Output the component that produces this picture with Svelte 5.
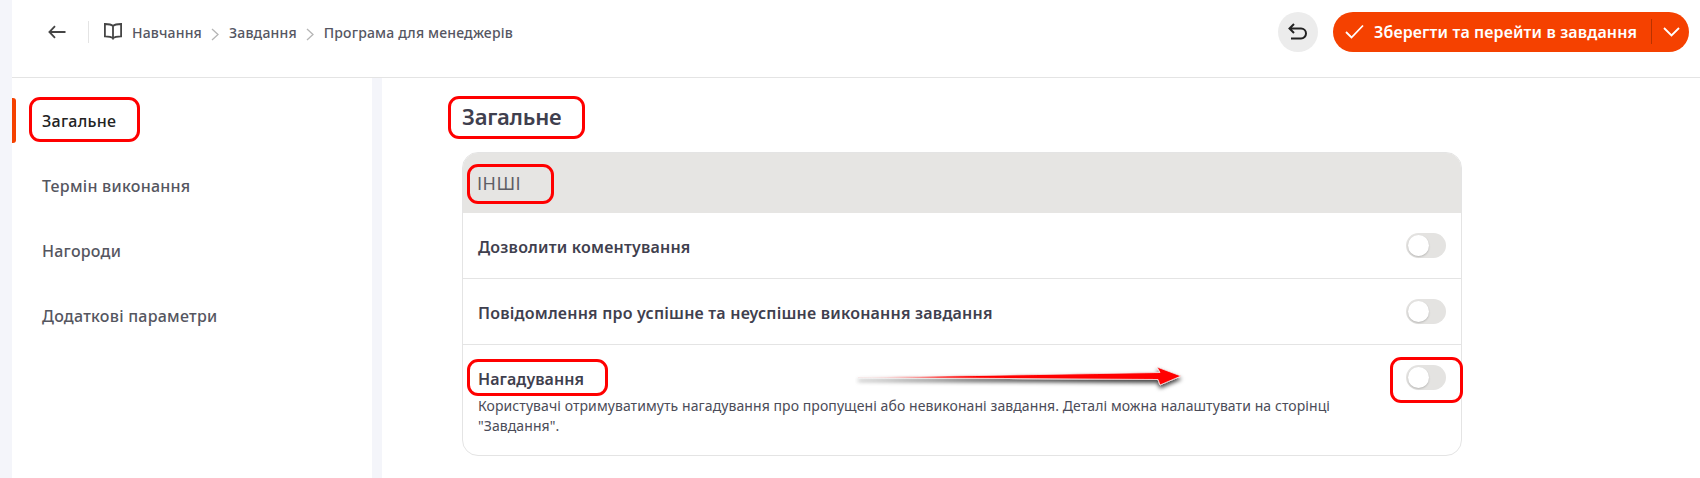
<script>
  const crumbs = ['Навчання', 'Завдання', 'Програма для менеджерів'];
  const nav = ['Загальне', 'Термін виконання', 'Нагороди', 'Додаткові параметри'];
</script>

<div class="page">
  <header class="top">
    <div class="left">
      <svg class="back" width="18" height="14" viewBox="0 0 18 14" fill="none" stroke="#454545" stroke-width="1.8"><path d="M17.500 7H1.500M7 1.200 1.400 7 7 12.800"/></svg>
      <span class="sep"></span>
      <svg class="book" width="18" height="17" viewBox="0 0 18 17" fill="none" stroke="#454545" stroke-width="1.800"><path d="M9 3C7.500 1.600 5 1 .9 1v12.400c4 0 6.600.4 8.100 1.800 1.500-1.400 4.100-1.800 8.100-1.800V1C13 1 10.500 1.600 9 3ZM9 3v13.500"/></svg>
      <nav class="crumbs">
        {#each crumbs as c, i}
          {#if i > 0}
            <svg class="chev" width="8" height="13" viewBox="0 0 8 13" fill="none" stroke="#b5b5b5" stroke-width="1.300"><path d="M1 1l6 5.500L1 12"/></svg>
          {/if}
          <span>{c}</span>
        {/each}
      </nav>
    </div>
    <div class="right">
      <button class="undo" aria-label="Скасувати">
        <svg width="20" height="17" viewBox="0 0 20 17" fill="none" stroke="#222" stroke-width="2"><path d="M6 1 1.500 5.500 6 10M1.500 5.500H13a5 5 0 0 1 0 10H3"/></svg>
      </button>
      <div class="save">
        <svg class="check" width="19" height="15" viewBox="0 0 19 15" fill="none" stroke="#fff" stroke-width="1.800"><path d="M1 8l5.500 5.500L18 1.500"/></svg>
        <span class="save-text">Зберегти та перейти в завдання</span>
        <span class="save-sep"></span>
        <svg class="down" width="17" height="10" viewBox="0 0 17 10" fill="none" stroke="#fff" stroke-width="1.800"><path d="M1 1l7.500 7.500L16 1"/></svg>
      </div>
    </div>
  </header>

  <div class="body">
    <aside class="side">
      {#each nav as n, i}
        <div class="item" class:active={i === 0}>{n}</div>
      {/each}
    </aside>
    <main class="main">
      <h1>Загальне</h1>
      <section class="card">
        <div class="card-head">ІНШІ</div>
        <div class="row">
          <span class="label">Дозволити коментування</span>
          <span class="toggle"><span class="knob"></span></span>
        </div>
        <div class="row">
          <span class="label">Повідомлення про успішне та неуспішне виконання завдання</span>
          <span class="toggle"><span class="knob"></span></span>
        </div>
        <div class="row last">
          <div class="text">
            <div class="label remind">Нагадування</div>
            <p>Користувачі отримуватимуть нагадування про пропущені або невиконані завдання. Деталі можна налаштувати на сторінці "Завдання".</p>
          </div>
          <span class="toggle"><span class="knob"></span></span>
        </div>
      </section>
    </main>
  </div>

  <span class="mark m-nav"></span>
  <span class="mark m-title"></span>
  <span class="mark m-other"></span>
  <span class="mark m-remind"></span>
  <span class="mark m-toggle"></span>
  <svg class="arrow" width="340" height="36" viewBox="0 0 340 36">
    <defs>
      <linearGradient id="g" x1="0" x2="1" y1="0" y2="0">
        <stop offset="0" stop-color="#fff"/>
        <stop offset="0.1" stop-color="#f66"/>
        <stop offset="0.25" stop-color="#f00"/>
        <stop offset="1" stop-color="#f00"/>
      </linearGradient>
      <filter id="s" x="-5%" y="-50%" width="110%" height="220%">
        <feDropShadow dx="0" dy="3" stdDeviation="2" flood-color="#000" flood-opacity="0.75"/>
      </filter>
    </defs>
    <path d="M3 14.500 305 9.500 302 4 326 13 305 22 303 16.500Z" fill="url(#g)" stroke="#f6e9e9" stroke-width="0.800" filter="url(#s)"/>
  </svg>
</div>

<style>
  :global(body) { margin: 0; background: #f4f5fa; }
  .page {
    position: relative;
    width: 1700px;
    height: 478px;
    overflow: hidden;
    font-family: "Noto Sans", "Open Sans", sans-serif;
    color: #3f404e;
  }
  .top {
    margin-left: 12px;
    height: 78px;
    box-sizing: border-box;
    background: #fff;
    border-bottom: 1px solid #e4e4e4;
    display: flex;
    align-items: center;
    justify-content: space-between;
    padding: 0 11px 14px 36px;
  }
  .left, .right, .crumbs, .save { display: flex; align-items: center; }
  .sep { width: 1px; height: 22px; background: #e4e4e4; margin: 0 15px 0 22px; }
  .crumbs { margin: 2px 0 0 10px; font-size: 14px; font-weight: 500; letter-spacing: 0.17px; color: #555662; gap: 9.5px; }
  .chev { margin-top: 3px; }
  .right { gap: 15px; }
  .undo {
    width: 40px; height: 40px; border: 0; border-radius: 50%;
    background: #ececec; padding: 0;
    display: flex; align-items: center; justify-content: center;
  }
  .save {
    width: 356px; height: 40px; box-sizing: border-box;
    background: #f54100; border-radius: 20px; color: #fff;
    padding-left: 12px;
  }
  .save-text { margin-left: 10px; font-size: 16px; font-weight: 600; letter-spacing: 0.12px; white-space: nowrap; width: 265px; }
  .save-sep { width: 1px; height: 25px; background: #b93200; margin: 0 11px 0 12px; }
  .body { display: flex; height: 400px; margin-left: 12px; }
  .side { width: 360px; background: #fff; padding-top: 10px; box-sizing: border-box; }
  .item {
    height: 65px; padding-left: 30px; display: flex; align-items: center;
    font-size: 16px; font-weight: 500; letter-spacing: 0.25px; color: #55565f; position: relative;
  }
  .item.active { color: #222; }
  .item.active::before {
    content: ""; position: absolute; left: 0; top: 10px; width: 4px; height: 45px;
    background: #f54100; border-radius: 0 3px 3px 0;
  }
  .main { flex: 1; margin-left: 10px; background: #fff; padding-left: 80px; }
  h1 { margin: 0; padding: 23px 0 0; height: 51px; font-size: 22px; line-height: 30px; font-weight: 600; letter-spacing: -0.25px; color: #3f404e; }
  .card {
    width: 1000px; box-sizing: border-box;
    border: 1px solid #e4e4e4; border-radius: 16px; overflow: hidden; background: #fff;
  }
  .card-head {
    height: 61px; background: #e6e5e3; padding-left: 15px;
    display: flex; align-items: center;
    font-size: 18px; letter-spacing: 0.5px; color: #5d5e66; margin: -1px -1px 0;
  }
  .row {
    height: 65px; padding: 0 15px; display: flex; align-items: center; justify-content: space-between;
    border-bottom: 1px solid #e4e4e4;
  }
  .row > .label { padding-top: 2px; }
  .row.last { height: 110px; border-bottom: 0; align-items: flex-start; padding-top: 21px; box-sizing: border-box; }
  .label { font-size: 16px; font-weight: 600; letter-spacing: 0.2px; line-height: 24px; color: #3f404e; }
  .label.remind { padding-top: 1px; letter-spacing: 0.05px; }
  .text { width: 880px; }
  p { margin: 5px 0 0; font-size: 14px; line-height: 20px; letter-spacing: 0.08px; color: #4b4c58; }
  .toggle {
    width: 40px; height: 25px; border-radius: 13px; background: #e4e3e1; position: relative; flex: none;
  }
  .row.last .toggle { margin-top: -1px; }
  .knob {
    position: absolute; left: 2px; top: 2px; width: 21px; height: 21px; border-radius: 50%;
    background: #fff; box-shadow: 0 1px 2px rgba(0,0,0,.2);
  }
  .mark { position: absolute; border: 3px solid #ff0000; border-radius: 11px; box-sizing: border-box; }
  .m-nav { left: 29px; top: 97px; width: 111px; height: 45px; }
  .m-title { left: 448px; top: 96px; width: 137px; height: 43px; }
  .m-other { left: 467px; top: 164px; width: 87px; height: 40px; }
  .m-remind { left: 467px; top: 359px; width: 141px; height: 37px; }
  .m-toggle { left: 1390px; top: 357px; width: 73px; height: 46px; }
  .arrow { position: absolute; left: 855px; top: 363px; }
</style>
